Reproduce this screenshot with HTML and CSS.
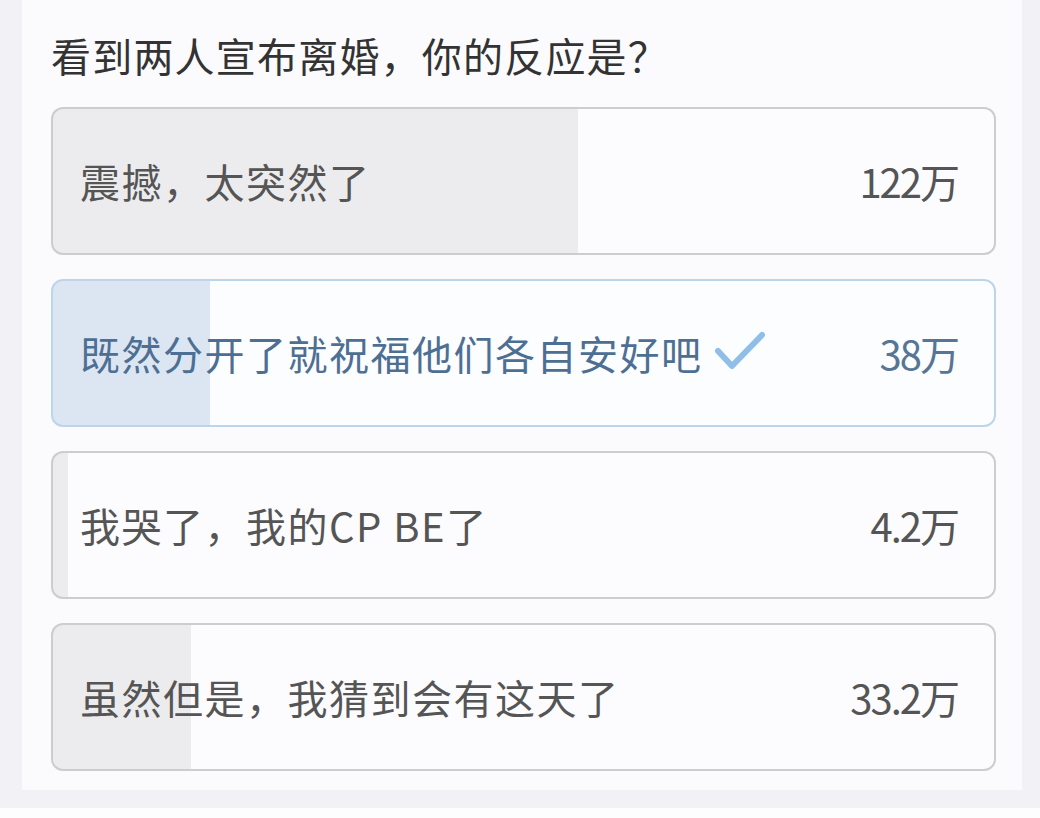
FILE: index.html
```html
<!DOCTYPE html>
<html lang="zh">
<head>
<meta charset="utf-8">
<link rel="stylesheet" href="styles.css">
</head>
<body>
<div class="page">
  <div class="card">
    <div class="title">看到两人宣布离婚，你的反应是？</div>
    <div class="options">
      <div class="opt" style="--p: 55.8%">
        <span class="label">震撼，太突然了</span>
        <span class="num">122万</span>
      </div>
      <div class="opt sel" style="--p: 16.7%">
        <span class="label">既然分开了就祝福他们各自安好吧<svg class="check" viewBox="0 0 50 40" width="50" height="40"><path d="M3 20 L17 35 L47 4" fill="none" stroke="#8fbfe8" stroke-width="6" stroke-linecap="round" stroke-linejoin="round"/></svg></span>
        <span class="num">38万</span>
      </div>
      <div class="opt" style="--p: 1.6%">
        <span class="label">我哭了，我的CP BE了</span>
        <span class="num">4.2万</span>
      </div>
      <div class="opt" style="--p: 14.7%">
        <span class="label">虽然但是，我猜到会有这天了</span>
        <span class="num">33.2万</span>
      </div>
    </div>
  </div>
  <div class="foot"></div>
  <div class="bottom"></div>
</div>
</body>
</html>
```

FILE: styles.css
```css
html, body {
  margin: 0;
  padding: 0;
}
body {
  background: #f2f2f6;
  font-family: "Noto Sans CJK SC", "Noto Sans", sans-serif;
  width: 1040px;
  height: 818px;
  overflow: hidden;
}
.page {
  display: flex;
  flex-direction: column;
  height: 818px;
}
.card {
  margin-left: 22px;
  width: 1000px;
  height: 790px;
  flex: none;
  background: #fbfbfd;
  box-sizing: border-box;
  padding: 30px 26px 0 29px;
}
.title {
  font-size: 40px;
  line-height: 50px;
  color: #333;
  letter-spacing: 1.2px;
}
.options {
  margin-top: 27px;
  display: flex;
  flex-direction: column;
  gap: 24px;
}
.opt {
  height: 148px;
  box-sizing: border-box;
  border: 2px solid #cdcdcf;
  border-radius: 12px;
  background: linear-gradient(to right, #ececee 0, #ececee var(--p), #fcfcfe var(--p));
  display: flex;
  align-items: center;
  justify-content: space-between;
  padding: 0 36px 0 27px;
  color: #555;
  font-size: 40px;
}
.opt.sel {
  border-color: #bcd5ea;
  background: linear-gradient(to right, #dce6f3 0, #dce6f3 var(--p), #fcfdff var(--p));
  color: #4e6f94;
}
.label {
  display: flex;
  align-items: center;
  letter-spacing: 1.5px;
}
.check {
  margin-left: 12px;
  margin-top: -4px;
}
.num {
  letter-spacing: -2px;
  color: #555;
}
.sel .num {
  color: #587595;
}
.foot {
  height: 18px;
  flex: none;
}
.bottom {
  flex: 1;
  background: #fdfdfd;
}
```
